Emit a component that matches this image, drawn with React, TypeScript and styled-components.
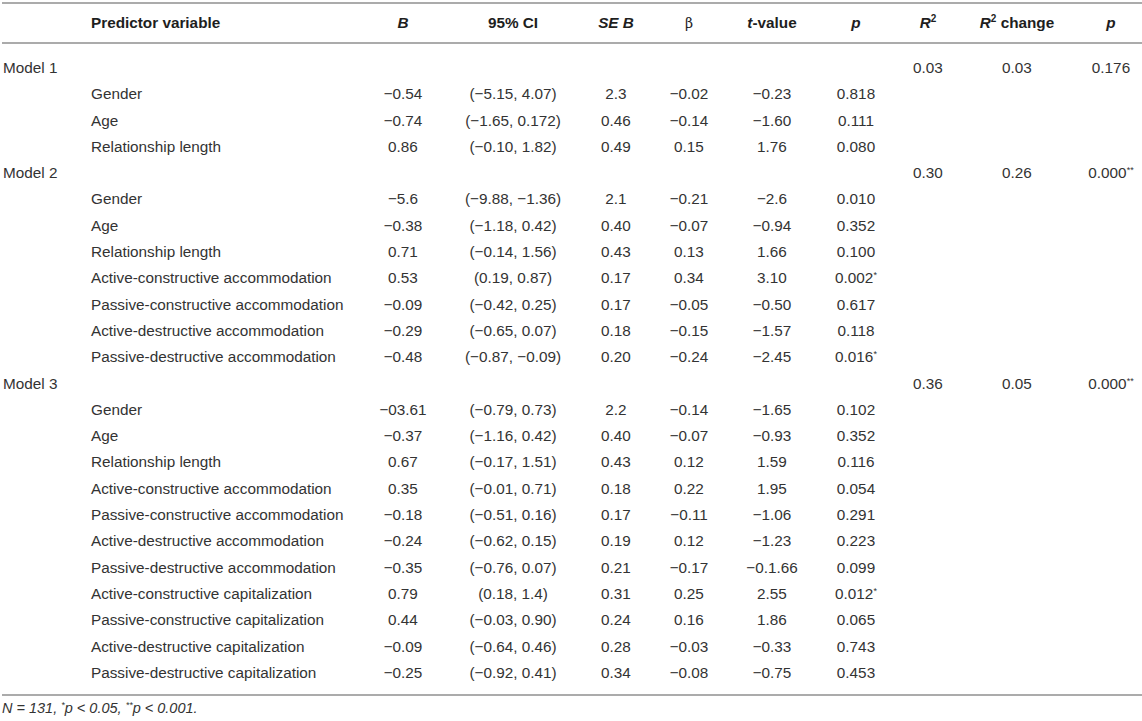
import React from 'react';
import styled, { createGlobalStyle } from 'styled-components';

const GlobalStyle = createGlobalStyle`
  body {
    margin: 0;
    background: #fff;
    font-family: "Liberation Sans", Arial, sans-serif;
  }
`;

const COLS = '86px 272px 86px 134px 72px 74px 92px 76px 68px 110px 68px';

type Row =
  | { kind: 'model'; name: string; r2: string; change: string; p: string; star?: string }
  | { kind: 'var'; name: string; b: string; ci: string; se: string; beta: string; t: string; p: string; star?: string };

const m = '\u2212';

const rows: Row[] = [
  { kind: 'model', name: 'Model 1', r2: '0.03', change: '0.03', p: '0.176' },
  { kind: 'var', name: 'Gender', b: `${m}0.54`, ci: `(${m}5.15, 4.07)`, se: '2.3', beta: `${m}0.02`, t: `${m}0.23`, p: '0.818' },
  { kind: 'var', name: 'Age', b: `${m}0.74`, ci: `(${m}1.65, 0.172)`, se: '0.46', beta: `${m}0.14`, t: `${m}1.60`, p: '0.111' },
  { kind: 'var', name: 'Relationship length', b: '0.86', ci: `(${m}0.10, 1.82)`, se: '0.49', beta: '0.15', t: '1.76', p: '0.080' },
  { kind: 'model', name: 'Model 2', r2: '0.30', change: '0.26', p: '0.000', star: '**' },
  { kind: 'var', name: 'Gender', b: `${m}5.6`, ci: `(${m}9.88, ${m}1.36)`, se: '2.1', beta: `${m}0.21`, t: `${m}2.6`, p: '0.010' },
  { kind: 'var', name: 'Age', b: `${m}0.38`, ci: `(${m}1.18, 0.42)`, se: '0.40', beta: `${m}0.07`, t: `${m}0.94`, p: '0.352' },
  { kind: 'var', name: 'Relationship length', b: '0.71', ci: `(${m}0.14, 1.56)`, se: '0.43', beta: '0.13', t: '1.66', p: '0.100' },
  { kind: 'var', name: 'Active-constructive accommodation', b: '0.53', ci: '(0.19, 0.87)', se: '0.17', beta: '0.34', t: '3.10', p: '0.002', star: '*' },
  { kind: 'var', name: 'Passive-constructive accommodation', b: `${m}0.09`, ci: `(${m}0.42, 0.25)`, se: '0.17', beta: `${m}0.05`, t: `${m}0.50`, p: '0.617' },
  { kind: 'var', name: 'Active-destructive accommodation', b: `${m}0.29`, ci: `(${m}0.65, 0.07)`, se: '0.18', beta: `${m}0.15`, t: `${m}1.57`, p: '0.118' },
  { kind: 'var', name: 'Passive-destructive accommodation', b: `${m}0.48`, ci: `(${m}0.87, ${m}0.09)`, se: '0.20', beta: `${m}0.24`, t: `${m}2.45`, p: '0.016', star: '*' },
  { kind: 'model', name: 'Model 3', r2: '0.36', change: '0.05', p: '0.000', star: '**' },
  { kind: 'var', name: 'Gender', b: `${m}03.61`, ci: `(${m}0.79, 0.73)`, se: '2.2', beta: `${m}0.14`, t: `${m}1.65`, p: '0.102' },
  { kind: 'var', name: 'Age', b: `${m}0.37`, ci: `(${m}1.16, 0.42)`, se: '0.40', beta: `${m}0.07`, t: `${m}0.93`, p: '0.352' },
  { kind: 'var', name: 'Relationship length', b: '0.67', ci: `(${m}0.17, 1.51)`, se: '0.43', beta: '0.12', t: '1.59', p: '0.116' },
  { kind: 'var', name: 'Active-constructive accommodation', b: '0.35', ci: `(${m}0.01, 0.71)`, se: '0.18', beta: '0.22', t: '1.95', p: '0.054' },
  { kind: 'var', name: 'Passive-constructive accommodation', b: `${m}0.18`, ci: `(${m}0.51, 0.16)`, se: '0.17', beta: `${m}0.11`, t: `${m}1.06`, p: '0.291' },
  { kind: 'var', name: 'Active-destructive accommodation', b: `${m}0.24`, ci: `(${m}0.62, 0.15)`, se: '0.19', beta: '0.12', t: `${m}1.23`, p: '0.223' },
  { kind: 'var', name: 'Passive-destructive accommodation', b: `${m}0.35`, ci: `(${m}0.76, 0.07)`, se: '0.21', beta: `${m}0.17`, t: `${m}0.1.66`, p: '0.099' },
  { kind: 'var', name: 'Active-constructive capitalization', b: '0.79', ci: '(0.18, 1.4)', se: '0.31', beta: '0.25', t: '2.55', p: '0.012', star: '*' },
  { kind: 'var', name: 'Passive-constructive capitalization', b: '0.44', ci: `(${m}0.03, 0.90)`, se: '0.24', beta: '0.16', t: '1.86', p: '0.065' },
  { kind: 'var', name: 'Active-destructive capitalization', b: `${m}0.09`, ci: `(${m}0.64, 0.46)`, se: '0.28', beta: `${m}0.03`, t: `${m}0.33`, p: '0.743' },
  { kind: 'var', name: 'Passive-destructive capitalization', b: `${m}0.25`, ci: `(${m}0.92, 0.41)`, se: '0.34', beta: `${m}0.08`, t: `${m}0.75`, p: '0.453' },
];

const App: React.FC = () => {
  return (
    <>
      <GlobalStyle />
      <Page>
        <Table>
          <HeadRow>
            <Cell />
            <Cell $align="left">Predictor variable</Cell>
            <Cell><i>B</i></Cell>
            <Cell>95% CI</Cell>
            <Cell><i>SE B</i></Cell>
            <Cell $serif>β</Cell>
            <Cell><i>t</i>-value</Cell>
            <Cell><i>p</i></Cell>
            <Cell><i>R</i><Sup>2</Sup></Cell>
            <Cell><i>R</i><Sup>2</Sup> change</Cell>
            <Cell $last><i>p</i></Cell>
          </HeadRow>
          <Body>
            {rows.map((r, i) =>
              r.kind === 'model' ? (
                <BodyRow key={i}>
                  <Cell $align="left" $model>{r.name}</Cell>
                  <Cell />
                  <Cell />
                  <Cell />
                  <Cell />
                  <Cell />
                  <Cell />
                  <Cell />
                  <Cell>{r.r2}</Cell>
                  <Cell>{r.change}</Cell>
                  <Cell $last>
                    {r.p}
                    {r.star && <Star>{r.star}</Star>}
                  </Cell>
                </BodyRow>
              ) : (
                <BodyRow key={i}>
                  <Cell />
                  <Cell $align="left">{r.name}</Cell>
                  <Cell>{r.b}</Cell>
                  <Cell>{r.ci}</Cell>
                  <Cell>{r.se}</Cell>
                  <Cell>{r.beta}</Cell>
                  <Cell>{r.t}</Cell>
                  <Cell>
                    {r.p}
                    {r.star && <Star>{r.star}</Star>}
                  </Cell>
                  <Cell />
                  <Cell />
                  <Cell $last />
                </BodyRow>
              )
            )}
          </Body>
        </Table>
        <Footnote>
          N = 131, <Star>*</Star>p &lt; 0.05, <Star>**</Star>p &lt; 0.001.
        </Footnote>
      </Page>
    </>
  );
};

const Page = styled.div`
  width: 1140px;
  padding: 2px 0 0 2px;
`;

const Table = styled.div`
  width: 100%;
  border-top: 2px solid #ababab;
  border-bottom: 2px solid #ababab;
  color: #333;
  font-size: 15.3px;
`;

const HeadRow = styled.div`
  display: grid;
  grid-template-columns: ${COLS};
  align-items: center;
  height: 38px;
  border-bottom: 2px solid #ababab;
  font-weight: 700;
  color: #1e1e1e;
`;

const Body = styled.div`
  padding: 10.85px 0 8px;
`;

const BodyRow = styled.div`
  display: grid;
  grid-template-columns: ${COLS};
  align-items: center;
  height: 26.3px;
`;

const Cell = styled.div<{ $align?: 'left' | 'center'; $model?: boolean; $serif?: boolean; $last?: boolean }>`
  text-align: ${(p) => p.$align ?? 'center'};
  padding-left: ${(p) => (p.$model ? '1px' : p.$align === 'left' ? '3px' : p.$last ? '10px' : '0')};
  white-space: nowrap;
  line-height: 18px;
  font-family: ${(p) => (p.$serif ? '"DejaVu Serif", "Liberation Serif", serif' : 'inherit')};
  font-weight: ${(p) => (p.$serif ? 400 : 'inherit')};
  font-size: ${(p) => (p.$serif ? '14px' : 'inherit')};

  i {
    font-style: italic;
  }
`;

const Sup = styled.sup`
  font-size: 10px;
  line-height: 0;
  vertical-align: 6px;
`;

const Star = styled.sup`
  font-size: 9px;
  line-height: 0;
  vertical-align: 5px;
`;

const Footnote = styled.div`
  padding-top: 4px;
  font-size: 14.5px;
  font-style: italic;
  color: #333;
  line-height: 16px;
`;

export default App;
